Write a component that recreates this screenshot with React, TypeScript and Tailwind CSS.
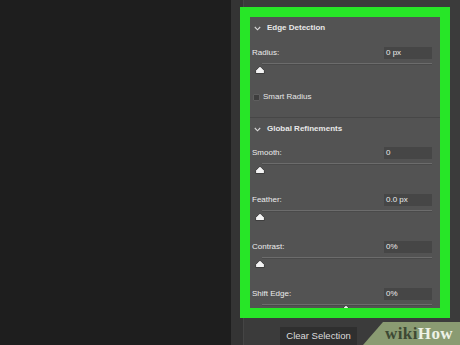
import React from "react";

function Chevron() {
  return (
    <svg width="7" height="5" viewBox="0 0 7 5" className="block">
      <path d="M0.8 1 L3.5 3.8 L6.2 1" fill="none" stroke="#d8d8d8" strokeWidth="1.1" />
    </svg>
  );
}

function Thumb() {
  return (
    <svg width="10" height="8" viewBox="0 0 10 8" className="block">
      <path d="M5 0.5 Q5.6 0.5 6.2 1.3 L9.4 4.6 L9.4 7.5 L0.6 7.5 L0.6 4.6 L3.8 1.3 Q4.4 0.5 5 0.5 Z" fill="#f4f4f4" stroke="#262626" strokeWidth="0.8" />
    </svg>
  );
}

function Header({ title }: { title: string }) {
  return (
    <div className="h-[12px] flex items-center">
      <div className="ml-[4px] w-[13px]">
        <Chevron />
      </div>
      <span className="text-[8px] font-bold text-[#e8e8e8] leading-none">{title}</span>
    </div>
  );
}

function SliderRow({
  label,
  value,
  center,
  mt,
  thumbMt = "mt-[1px]",
}: {
  label: string;
  value: string;
  center?: boolean;
  mt: string;
  thumbMt?: string;
}) {
  return (
    <div className={mt}>
      <div className="h-[12px] flex items-center justify-between pl-[2px] pr-[8px]">
        <span className="text-[8px] text-[#ececec] leading-none">{label}</span>
        <div className="w-[48px] h-[12px] bg-[#464646] flex items-center pl-[2px]">
          <span className="text-[8px] text-[#ececec] leading-none">{value}</span>
        </div>
      </div>
      <div className="mt-[4px] ml-[12px] mr-[8px] h-[2px] bg-[#6c6c6c] border-b border-[#4a4a4a]" />
      <div className={`${thumbMt} ${center ? "ml-[91px]" : "ml-[5px]"}`}>
        <Thumb />
      </div>
    </div>
  );
}

export default function App() {
  return (
    <div
      className="w-[460px] h-[345px] flex overflow-hidden"
      style={{ fontFamily: '"Liberation Sans", Arial, sans-serif' }}
    >
      <div className="w-[231px] h-full bg-[#1e1e1e]" />
      <div className="flex-1 h-full relative flex flex-col bg-[linear-gradient(to_right,#343434_0,#343434_12px,#454545_12px,#454545_13px,#3b3b3b_13px)]">
        <div className="shrink-0 mt-[7px] ml-[9px] w-[210px] h-[311px] border-[10px] border-[#27e627] bg-[#535353] overflow-hidden">
          <div className="mt-[5px]">
            <Header title="Edge Detection" />
          </div>
          <SliderRow label="Radius:" value="0 px" mt="mt-[13px]" />
          <div className="mt-[19px] h-[8px] flex items-center pl-[3px]">
            <div className="w-[7px] h-[7px] bg-[#3e3e3e] border border-[#5e5e5e] rounded-[1px]" />
            <span className="ml-[3px] text-[8px] text-[#e6e6e6] leading-none">Smart Radius</span>
          </div>
          <div className="mt-[16px] h-[1px] bg-[#474747]" />
          <div className="mt-[5px]">
            <Header title="Global Refinements" />
          </div>
          <SliderRow label="Smooth:" value="0" mt="mt-[12px]" />
          <SliderRow label="Feather:" value="0.0 px" mt="mt-[20px]" />
          <SliderRow label="Contrast:" value="0%" mt="mt-[20px]" />
          <SliderRow label="Shift Edge:" value="0%" mt="mt-[20px]" center thumbMt="mt-[-1px]" />
        </div>
        <div className="shrink-0 mt-[9px] ml-[49px] w-[77px] h-[22px] bg-[#2f2f2f] flex items-start justify-center pt-[3px]">
          <span className="text-[9.5px] text-[#dcdcdc] leading-[12px]">Clear Selection</span>
        </div>
        <div className="absolute right-0 bottom-0 w-[97px] h-[23px] bg-[#8a9b72] [clip-path:polygon(20px_0,100%_0,100%_100%,0_100%)] flex items-center pl-[22px]">
          <span
            className="text-[17px] font-bold leading-none tracking-[0.4px]"
            style={{ fontFamily: '"Liberation Serif", "Times New Roman", serif' }}
          >
            <span className="text-[#3d4934]">wiki</span>
            <span className="text-[#eef2e6]">How</span>
          </span>
        </div>
      </div>
    </div>
  );
}
